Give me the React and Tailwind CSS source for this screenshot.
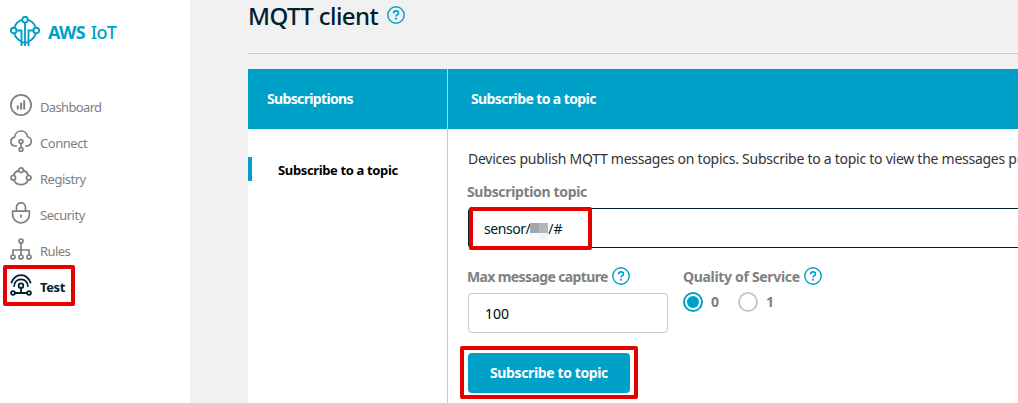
import React from "react";

const items = [
  ["Dashboard", "dashboard", "tracking-[-0.65px]"],
  ["Connect", "connect", "tracking-[-0.45px]"],
  ["Registry", "registry", "tracking-[-0.5px]"],
  ["Security", "security", "tracking-[-0.5px]"],
  ["Rules", "rules", "tracking-[-0.6px]"],
  ["Test", "test", "tracking-[-0.4px]"],
];

function NavIcon({ name }) {
  const shapes = {
    dashboard: (
      <>
        <circle cx="11" cy="11" r="10.1" />
        <path d="M7.8 15.5v-4M11.1 15.5V8.8M14.2 15.5V6.2" strokeWidth="2" />
      </>
    ),
    connect: (
      <>
        <path d="M7 16H5.2C2.7 15.7.9 13.8.9 11.4c0-2.3 1.6-3.8 3.6-4.3C5 3.8 7.5 1 11 1s6 2.4 6.6 5.8c2.2.6 3.6 2.3 3.6 4.5 0 2.6-1.9 4.5-4.4 4.7H15" />
        <circle cx="11" cy="11.5" r="1.9" />
        <circle cx="11" cy="19.6" r="1.9" />
        <path d="M11 13.4v4.3" />
      </>
    ),
    registry: (
      <>
        <path d="M8.6 4.4A8.2 8.2 0 0 0 3.6 9.2M13.4 4.4a8.2 8.2 0 0 1 5 4.8M3.8 14.2a8 8 0 0 0 14.4 0" />
        <circle cx="11" cy="4.2" r="2.3" />
        <circle cx="3.3" cy="11.8" r="2.3" />
        <circle cx="18.7" cy="11.8" r="2.3" />
      </>
    ),
    security: (
      <path d="M6.5 9V5.3a4.5 4.5 0 0 1 9 0V9M2.6 9.2h16.8v3.3a8.4 8.4 0 0 1-16.8 0zM11 12.5v3.3" />
    ),
    rules: (
      <>
        <circle cx="11" cy="3" r="2" />
        <circle cx="3" cy="19" r="2" />
        <circle cx="11" cy="19" r="2" />
        <circle cx="19" cy="19" r="2" />
        <path d="M11 5v12M3 17v-5h16v5" />
      </>
    ),
    test: (
      <g strokeWidth="1.8">
        <path d="M1.2 9.3C3 4.2 6.7 1.2 11 1.2s8 3 9.8 8.1M4 12.8C4.1 8.3 7 5.3 11 5.3s6.9 3 7 7.5" />
        <circle cx="11" cy="11.7" r="2.3" />
        <circle cx="3" cy="19" r="1.9" />
        <circle cx="19" cy="19" r="1.9" />
        <path d="M11 14V19M5 19h12" />
      </g>
    ),
  };
  return (
    <svg className="size-[22px] shrink-0" viewBox="0 0 22 22" fill="none" stroke="currentColor" strokeWidth="1.7">
      {shapes[name]}
    </svg>
  );
}

function Logo() {
  return (
    <svg className="size-[30px] shrink-0" viewBox="0 0 30 30" fill="none" stroke="currentColor" strokeWidth="1.9">
      <path d="M12 3.9A12 12 0 0 0 4.4 11.5M18 3.9a12 12 0 0 1 7.6 7.6M4.4 17.5a12 12 0 0 0 6.8 7.8M25.6 17.5a12 12 0 0 1-6.8 7.8M15 26.5h-4M15 26.5h4" />
      <circle cx="15" cy="3.7" r="2.8" />
      <circle cx="3.7" cy="14.5" r="2.8" />
      <circle cx="26.3" cy="14.5" r="2.8" />
      <path d="M15 6.5V30M6.5 14.5H11.5V30M23.5 14.5H18.5V30" />
    </svg>
  );
}

function Help() {
  return (
    <svg className="size-[18px] shrink-0 text-[#00a1c9]" viewBox="0 0 18 18" fill="none" stroke="currentColor" strokeWidth="1.4">
      <circle cx="9" cy="9" r="8.2" />
      <path d="M6.5 7.2C6.6 5.6 7.6 4.8 9 4.8s2.5.8 2.5 2.1c0 1.7-2.4 1.7-2.4 3.6" strokeWidth="1.7" />
      <path d="M9.1 11.8v1.8" strokeWidth="1.9" />
    </svg>
  );
}

export default function App() {
  return (
    <div className="flex h-[403px] w-[1018px] overflow-hidden bg-[#f1f1f1] font-['Noto_Sans','Open_Sans',sans-serif] text-[14px] leading-5 whitespace-nowrap">
      <aside className="w-[190px] shrink-0 bg-white pt-4">
        <div className="flex h-[30px] items-center gap-2 pl-[10px] text-[#00a1c9]">
          <Logo />
          <div className="flex gap-[6px] pt-px text-[18px] leading-6 tracking-[-0.75px]"><b>AWS</b><span className="font-medium">IoT</span></div>
        </div>
        <nav className="mt-[41px]">
          {items.map(([label, icon, tracking]) => (
            <div key={label} className={`relative flex h-9 items-center gap-2 pl-[10px] ${tracking} ${icon === "test" ? "font-bold text-[#00212e]" : "text-[#808080]"}`}>
              <NavIcon name={icon} />
              <span className="pt-[4px] text-[13px]">{label}</span>
              {icon === "test" && <div className="absolute top-[-2px] left-[3px] h-[41px] w-[72px] rounded-[2px] border-4 border-[#e60000]" />}
            </div>
          ))}
        </nav>
      </aside>
      <main className="w-[828px] shrink-0 pl-[58px]">
        <header className="flex h-[54px] items-start gap-[9px] border-b border-[#c8c8c8] pt-px text-[#00212e]">
          <h1 className="text-[24px] leading-[30px] font-medium tracking-[-0.6px]">MQTT client</h1>
          <div className="pt-[5px]"><Help /></div>
        </header>
        <section className="mt-[15px] h-[334px] bg-white">
          <div className="flex h-[60px] items-center bg-[#00a1c9] font-bold text-white">
            <div className="flex h-full w-[200px] items-center border-r border-[#c8c8c8] pl-[19px] tracking-[-0.65px]"><span>Subscriptions</span></div>
            <div className="pl-[23px] tracking-[-0.6px]"><span>Subscribe to a topic</span></div>
          </div>
          <div className="flex h-[274px]">
            <div className="w-[200px] shrink-0 border-r border-[#c8c8c8] pt-7">
              <div className="flex h-6 items-center border-l-4 border-[#00a1c9] pt-px pl-[26px] text-[13px] font-bold text-black"><span className="tracking-[-0.36px]">Subscribe to a topic</span></div>
            </div>
            <div className="w-[570px] shrink-0 overflow-hidden pt-5 pl-5">
              <p className="text-[#333]"><span className="tracking-[-0.26px]">Devices publish MQTT messages on topics. Subscribe to a topic to view the messages pr</span></p>
              <div className="mt-[13px] font-bold text-[#808080]"><span className="-ml-px tracking-[-0.34px]">Subscription topic</span></div>
              <div className="relative mt-[6px] flex h-10 w-[600px] items-center rounded-[3px] border border-[#00212e] pt-[1px] pl-[15px] text-[#00212e]">
                <span className="tracking-[-0.45px]">sensor/</span>
                <span className="mt-[6px] grid h-[17px] w-[18px] grid-cols-2 grid-rows-[10px_7px]"><i className="bg-[#a0a9b0]" /><i className="bg-[#b1b8bc]" /><i className="bg-[#f8f8f9]" /><i className="bg-[#f3f3f3]" /></span>
                <span>/#</span>
                <div className="absolute top-[-2px] left-0 h-[43px] w-[123px] rounded-[2px] border-4 border-[#e60000]" />
              </div>
              <div className="mt-[18px] flex text-[#808080]">
                <div className="w-[215px]">
                  <div className="flex h-5 items-center gap-1 font-bold"><span className="-ml-px pt-[2px] tracking-[-0.62px]">Max message capture</span><Help /></div>
                  <div className="mt-[7px] flex h-10 w-[200px] items-center rounded-[4px] border border-[#c8c8c8] pt-[2px] pl-4 text-black">100</div>
                </div>
                <div className="font-bold">
                  <div className="flex h-5 items-center gap-1"><span className="pt-[2px] tracking-[-0.32px]">Quality of Service</span><Help /></div>
                  <div className="mt-[6px] flex h-5 items-center">
                    <span className="flex size-5 items-center justify-center rounded-full border-2 border-[#00a1c9]"><i className="size-3 rounded-full bg-[#00a1c9]" /></span>
                    <span className="w-[35px] pl-2">0</span>
                    <span className="size-5 rounded-full border-2 border-[#c8c8c8]" />
                    <span className="pl-2">1</span>
                  </div>
                </div>
              </div>
              <div className="relative mt-5 flex h-10 w-[162px] items-center justify-center rounded-[4px] bg-[#00a1c9] font-bold text-white">
                <span className="tracking-[-0.38px]">Subscribe to topic</span>
                <div className="absolute top-[-7px] left-[-8px] h-[53px] w-[178px] rounded-[2px] border-4 border-[#e60000]" />
              </div>
            </div>
          </div>
        </section>
      </main>
    </div>
  );
}
